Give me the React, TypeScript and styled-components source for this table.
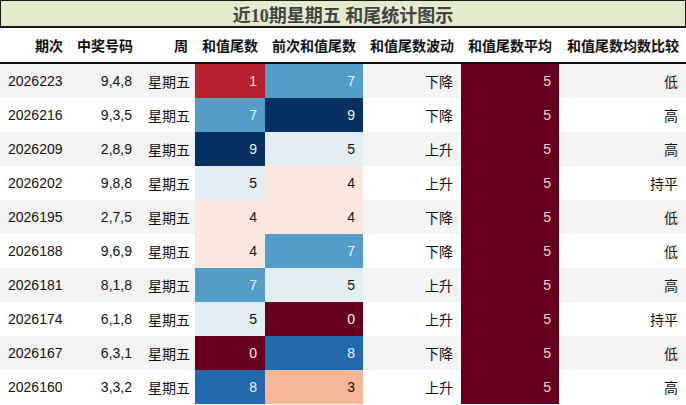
import React from "react";
import styled, { createGlobalStyle } from "styled-components";

const GlobalStyle = createGlobalStyle`
  html, body {
    margin: 0;
    padding: 0;
    background: #ffffff;
  }
  body {
    font-family: "Liberation Sans", "Noto Sans CJK SC", sans-serif;
    color: #111;
  }
`;

// RdBu colour scale, 0..9
const scale: Record<number, { bg: string; fg: string }> = {
  0: { bg: "#67001f", fg: "#f1f1f1" },
  1: { bg: "#b61f2e", fg: "#f1f1f1" },
  3: { bg: "#f6b799", fg: "#111" },
  4: { bg: "#f9e7dd", fg: "#111" },
  5: { bg: "#e2edf3", fg: "#111" },
  7: { bg: "#539dc8", fg: "#f1f1f1" },
  8: { bg: "#2468ad", fg: "#f1f1f1" },
  9: { bg: "#053061", fg: "#f1f1f1" },
};

type Row = {
  issue: string;
  nums: string;
  tail: number;
  prev: number;
  trend: string;
  cmp: string;
};

const rows: Row[] = [
  { issue: "2026223", nums: "9,4,8", tail: 1, prev: 7, trend: "下降", cmp: "低" },
  { issue: "2026216", nums: "9,3,5", tail: 7, prev: 9, trend: "下降", cmp: "高" },
  { issue: "2026209", nums: "2,8,9", tail: 9, prev: 5, trend: "上升", cmp: "高" },
  { issue: "2026202", nums: "9,8,8", tail: 5, prev: 4, trend: "上升", cmp: "持平" },
  { issue: "2026195", nums: "2,7,5", tail: 4, prev: 4, trend: "下降", cmp: "低" },
  { issue: "2026188", nums: "9,6,9", tail: 4, prev: 7, trend: "下降", cmp: "低" },
  { issue: "2026181", nums: "8,1,8", tail: 7, prev: 5, trend: "上升", cmp: "高" },
  { issue: "2026174", nums: "6,1,8", tail: 5, prev: 0, trend: "上升", cmp: "持平" },
  { issue: "2026167", nums: "6,3,1", tail: 0, prev: 8, trend: "下降", cmp: "低" },
  { issue: "2026160", nums: "3,3,2", tail: 8, prev: 3, trend: "上升", cmp: "高" },
];

const columns = [
  { label: "期次", width: 70 },
  { label: "中奖号码", width: 70 },
  { label: "周", width: 55 },
  { label: "和值尾数", width: 70 },
  { label: "前次和值尾数", width: 98 },
  { label: "和值尾数波动", width: 98 },
  { label: "和值尾数平均", width: 98 },
  { label: "和值尾数均数比较", width: 127 },
];

const Page = styled.div`
  width: 686px;
  height: 405px;
  overflow: hidden;
`;

const Title = styled.div`
  box-sizing: border-box;
  height: 28px;
  border: 1px solid #1a1a1a;
  border-bottom-width: 2px;
  background: #e3ebcd;
  display: flex;
  align-items: center;
  justify-content: center;
  font-family: "Liberation Serif", "Noto Sans CJK SC", serif;
  font-weight: 700;
  font-size: 18px;
  color: #444;
`;

const Table = styled.table`
  width: 686px;
  border-collapse: collapse;
  table-layout: fixed;
  font-size: 14px;
`;

const HeadCell = styled.th`
  height: 34px;
  padding: 0 7px 0 0;
  text-align: right;
  font-weight: 700;
  color: #111;
  white-space: nowrap;
  border-bottom: 2px solid #111;
`;

const BodyRow = styled.tr<{ $odd: boolean }>`
  background: ${(p) => (p.$odd ? "#f3f3f3" : "#ffffff")};
`;

const Cell = styled.td<{ $left?: boolean }>`
  height: 34px;
  padding: 0 8px;
  text-align: ${(p) => (p.$left ? "left" : "right")};
  white-space: nowrap;
  color: #111;
`;

const HeatCell = styled(Cell)<{ $v: number }>`
  background: ${(p) => scale[p.$v].bg};
  color: ${(p) => scale[p.$v].fg};
`;

const MeanCell = styled(Cell)`
  background: #67001f;
  color: #e8d6da;
`;

export default function App() {
  return (
    <Page>
      <GlobalStyle />
      <Title>近10期星期五 和尾统计图示</Title>
      <Table>
        <colgroup>
          {columns.map((c) => (
            <col key={c.label} style={{ width: c.width }} />
          ))}
        </colgroup>
        <thead>
          <tr>
            {columns.map((c) => (
              <HeadCell key={c.label}>{c.label}</HeadCell>
            ))}
          </tr>
        </thead>
        <tbody>
          {rows.map((r, i) => (
            <BodyRow key={r.issue} $odd={i % 2 === 0}>
              <Cell $left>{r.issue}</Cell>
              <Cell>{r.nums}</Cell>
              <Cell>星期五</Cell>
              <HeatCell $v={r.tail}>{r.tail}</HeatCell>
              <HeatCell $v={r.prev}>{r.prev}</HeatCell>
              <Cell>{r.trend}</Cell>
              <MeanCell>5</MeanCell>
              <Cell>{r.cmp}</Cell>
            </BodyRow>
          ))}
        </tbody>
      </Table>
    </Page>
  );
}
